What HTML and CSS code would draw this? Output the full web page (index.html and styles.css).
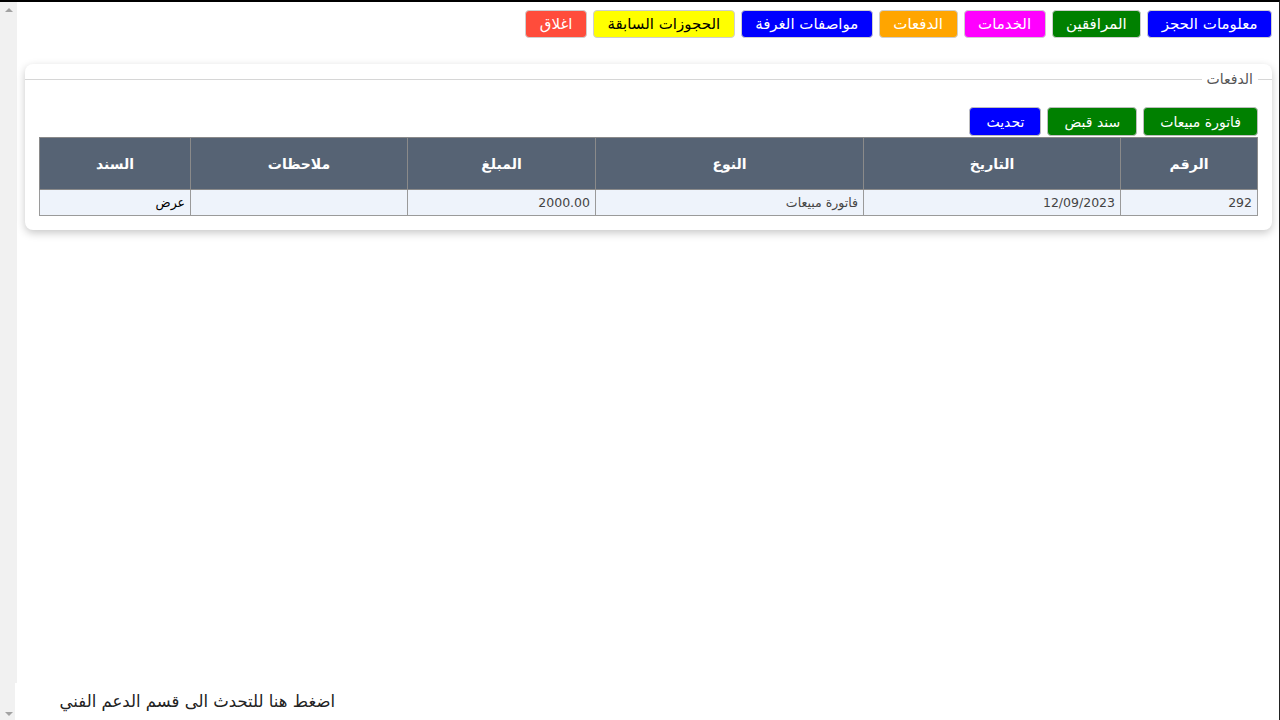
FILE: index.html
```html
<!DOCTYPE html>
<html lang="ar">
<head>
<meta charset="utf-8">
<title>الدفعات</title>
<link rel="stylesheet" href="styles.css">
</head>
<body>
<div class="frame">
  <div class="scrollbar">
    <span class="arrow up"></span>
    <span class="arrow down"></span>
  </div>
  <div class="page" dir="rtl">
    <nav class="tabs">
      <button class="btn blue">معلومات الحجز</button>
      <button class="btn green">المرافقين</button>
      <button class="btn magenta">الخدمات</button>
      <button class="btn orange">الدفعات</button>
      <button class="btn blue">مواصفات الغرفة</button>
      <button class="btn yellow">الحجوزات السابقة</button>
      <button class="btn red">اغلاق</button>
    </nav>
    <div class="card">
      <fieldset class="group">
        <legend>الدفعات</legend>
        <div class="actions">
          <button class="btn act green">فاتورة مبيعات</button>
          <button class="btn act green">سند قبض</button>
          <button class="btn act blue">تحديث</button>
        </div>
        <table class="grid">
          <colgroup>
            <col style="width:137px">
            <col style="width:257px">
            <col style="width:268px">
            <col style="width:188px">
            <col style="width:217px">
            <col style="width:151px">
          </colgroup>
          <thead>
            <tr>
              <th>الرقم</th>
              <th>التاريخ</th>
              <th>النوع</th>
              <th>المبلغ</th>
              <th>ملاحظات</th>
              <th>السند</th>
            </tr>
          </thead>
          <tbody>
            <tr>
              <td>292</td>
              <td>12/09/2023</td>
              <td>فاتورة مبيعات</td>
              <td>2000.00</td>
              <td></td>
              <td class="link">عرض</td>
            </tr>
          </tbody>
        </table>
      </fieldset>
    </div>
  </div>
</div>
<div class="support" dir="rtl">اضغط هنا للتحدث الى قسم الدعم الفني</div>
</body>
</html>
```

FILE: styles.css
```css
html, body {
  margin: 0;
  padding: 0;
  height: 100%;
  background: #ffffff;
}
body {
  font-family: "DejaVu Sans", "Noto Sans", sans-serif;
  overflow: hidden;
}
.frame {
  display: flex;
  height: 720px;
  box-sizing: border-box;
  border-top: 2px solid #000;
  border-right: 1px solid #222;
}
.scrollbar {
  width: 17px;
  flex: 0 0 17px;
  background: #f1f1f1;
  display: flex;
  flex-direction: column;
  justify-content: space-between;
  align-items: center;
  padding: 6px 0 4px;
  box-sizing: border-box;
}
.arrow {
  width: 0;
  height: 0;
  border-left: 4px solid transparent;
  border-right: 4px solid transparent;
}
.arrow.up { border-bottom: 4px solid #a3a3a3; }
.arrow.down { border-top: 4px solid #a3a3a3; }
.page {
  flex: 1;
  padding: 8px 7px 0 8px;
}
.tabs {
  display: flex;
  gap: 6px;
}
.btn {
  font-family: "DejaVu Sans", sans-serif;
  font-size: 15px;
  height: 28px;
  padding: 0 13.5px;
  border: 1px solid #cfcfcf;
  border-radius: 4px;
  color: #fff;
  cursor: pointer;
}
.blue { background: #0000ff; }
.green { background: #008000; }
.magenta { background: #ff00ff; }
.orange { background: #ffa500; }
.yellow { background: #ffff00; color: #000; }
.red { background: #ff4c3b; }
.card {
  margin-top: 26px;
  background: #fff;
  border-radius: 8px;
  box-shadow: 0 3px 9px rgba(0,0,0,0.22);
  padding: 7px 0 14px;
}
.group {
  margin: 0;
  border: none;
  border-top: 1px solid #d6d6d6;
  padding: 0 14px;
  min-width: 0;
}
.group legend {
  font-size: 14px;
  color: #555;
  padding: 0 5px;
  margin-right: 0;
}
.actions {
  display: flex;
  gap: 6px;
  margin-top: 20px;
  margin-bottom: 1px;
}
.btn.act {
  font-size: 14px;
  height: 29px;
  padding: 0 16px;
  border-color: #bdbdbd;
}
.grid {
  width: 100%;
  border-collapse: collapse;
  table-layout: fixed;
  border: 1px solid #9a9a9a;
}
.grid th {
  background: #566374;
  color: #fff;
  font-size: 14px;
  font-weight: bold;
  height: 51px;
  padding: 0;
  border: 1px solid #8a8a8a;
  text-align: center;
}
.grid td {
  background: #eef3fb;
  color: #444;
  font-size: 12.5px;
  height: 25px;
  padding: 0 5px;
  border: 1px solid #9a9a9a;
  text-align: right;
}
.grid td.link { color: #000; }
.support {
  position: fixed;
  left: 15px;
  bottom: 0;
  width: 330px;
  height: 37px;
  background: #fff;
  font-family: "DejaVu Sans", sans-serif;
  font-size: 16.5px;
  color: #222;
  display: flex;
  align-items: center;
  justify-content: flex-start;
  padding-right: 10px;
  box-sizing: border-box;
}
```
